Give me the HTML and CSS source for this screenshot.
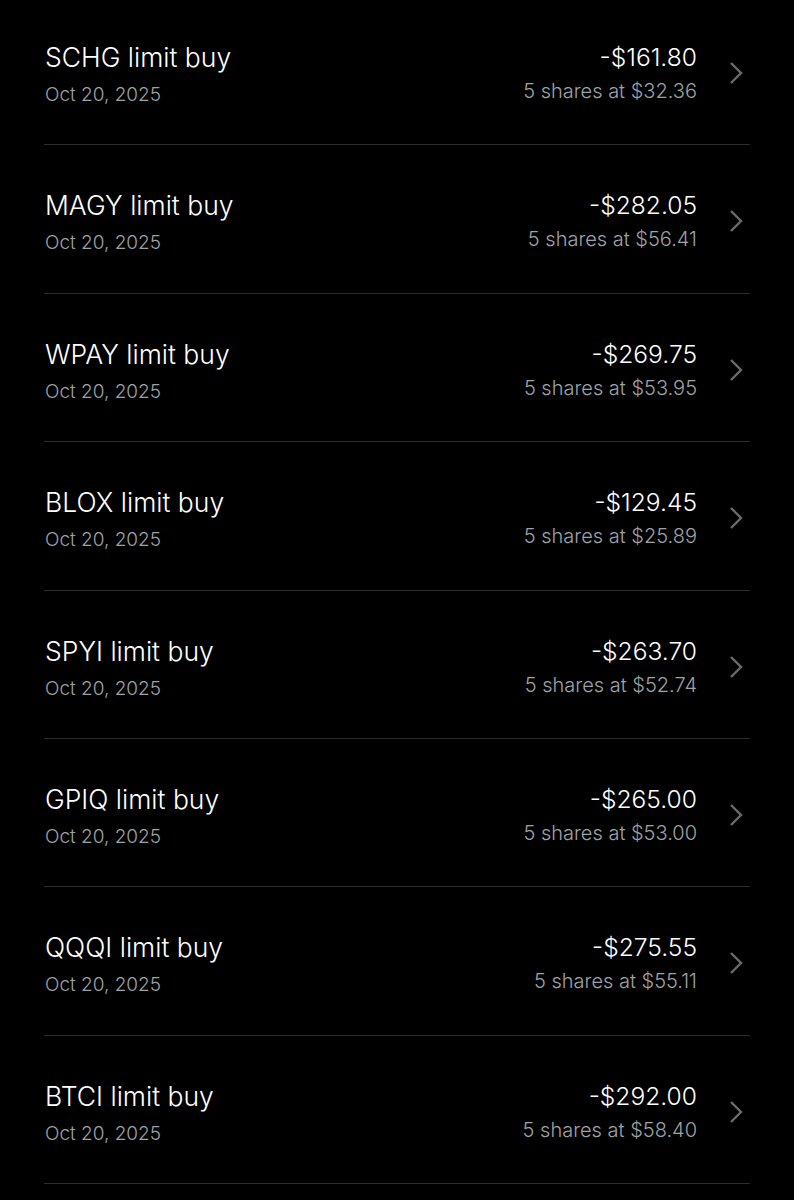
FILE: index.html
```html
<!DOCTYPE html>
<html lang="en">
<head>
    <meta charset="UTF-8">
    <meta name="viewport" content="width=device-width, initial-scale=1.0">
    <title>History</title>
    <link rel="stylesheet" href="styles.css">
</head>
<body>
    <div class="history">
        <div class="order">
            <div class="order-left">
                <div class="order-title">SCHG limit buy</div>
                <div class="order-date">Oct 20, 2025</div>
            </div>
            <div class="order-right">
                <div class="order-amount">-$161.80</div>
                <div class="order-detail">5 shares at $32.36</div>
            </div>
            <svg class="chevron" viewBox="0 0 14 24"><path d="M2 2 L12 12 L2 22"/></svg>
        </div>
        <div class="order">
            <div class="order-left">
                <div class="order-title">MAGY limit buy</div>
                <div class="order-date">Oct 20, 2025</div>
            </div>
            <div class="order-right">
                <div class="order-amount">-$282.05</div>
                <div class="order-detail">5 shares at $56.41</div>
            </div>
            <svg class="chevron" viewBox="0 0 14 24"><path d="M2 2 L12 12 L2 22"/></svg>
        </div>
        <div class="order">
            <div class="order-left">
                <div class="order-title">WPAY limit buy</div>
                <div class="order-date">Oct 20, 2025</div>
            </div>
            <div class="order-right">
                <div class="order-amount">-$269.75</div>
                <div class="order-detail">5 shares at $53.95</div>
            </div>
            <svg class="chevron" viewBox="0 0 14 24"><path d="M2 2 L12 12 L2 22"/></svg>
        </div>
        <div class="order">
            <div class="order-left">
                <div class="order-title">BLOX limit buy</div>
                <div class="order-date">Oct 20, 2025</div>
            </div>
            <div class="order-right">
                <div class="order-amount">-$129.45</div>
                <div class="order-detail">5 shares at $25.89</div>
            </div>
            <svg class="chevron" viewBox="0 0 14 24"><path d="M2 2 L12 12 L2 22"/></svg>
        </div>
        <div class="order">
            <div class="order-left">
                <div class="order-title">SPYI limit buy</div>
                <div class="order-date">Oct 20, 2025</div>
            </div>
            <div class="order-right">
                <div class="order-amount">-$263.70</div>
                <div class="order-detail">5 shares at $52.74</div>
            </div>
            <svg class="chevron" viewBox="0 0 14 24"><path d="M2 2 L12 12 L2 22"/></svg>
        </div>
        <div class="order">
            <div class="order-left">
                <div class="order-title">GPIQ limit buy</div>
                <div class="order-date">Oct 20, 2025</div>
            </div>
            <div class="order-right">
                <div class="order-amount">-$265.00</div>
                <div class="order-detail">5 shares at $53.00</div>
            </div>
            <svg class="chevron" viewBox="0 0 14 24"><path d="M2 2 L12 12 L2 22"/></svg>
        </div>
        <div class="order">
            <div class="order-left">
                <div class="order-title">QQQI limit buy</div>
                <div class="order-date">Oct 20, 2025</div>
            </div>
            <div class="order-right">
                <div class="order-amount">-$275.55</div>
                <div class="order-detail">5 shares at $55.11</div>
            </div>
            <svg class="chevron" viewBox="0 0 14 24"><path d="M2 2 L12 12 L2 22"/></svg>
        </div>
        <div class="order">
            <div class="order-left">
                <div class="order-title">BTCI limit buy</div>
                <div class="order-date">Oct 20, 2025</div>
            </div>
            <div class="order-right">
                <div class="order-amount">-$292.00</div>
                <div class="order-detail">5 shares at $58.40</div>
            </div>
            <svg class="chevron" viewBox="0 0 14 24"><path d="M2 2 L12 12 L2 22"/></svg>
        </div>
    </div>
</body>
</html>
```

FILE: styles.css
```css
body {
    margin: 0;
    padding: 0;
    background: #000;
    color: #fff;
    font-family: Inter, "Liberation Sans", sans-serif;
    height: 1200px;
    overflow: hidden;
}
.history {
    margin: -3px 44px 0 44px;
}
.order {
    display: flex;
    align-items: flex-start;
    height: 148.4px;
    box-sizing: border-box;
    border-bottom: 1px solid #2c2c2c;
    padding-top: 43px;
}
.order-left {
    flex: 1;
    padding-left: 1px;
}
.order-title {
    font-size: 26.5px;
    line-height: 34px;
    font-weight: 300;
}
.order-date {
    font-size: 19px;
    line-height: 30px;
    margin-top: 6px;
    color: #9ea3a8;
    font-weight: 300;
}
.order-right {
    text-align: right;
}
.order-amount {
    font-size: 24.6px;
    line-height: 34px;
    font-weight: 300;
}
.order-detail {
    font-size: 20px;
    line-height: 30px;
    margin-top: 2px;
    color: #9ea3a8;
    font-weight: 300;
}
.chevron {
    width: 14px;
    height: 24px;
    margin: 21px 7px 0 32px;
    fill: none;
    stroke: #6b6b6b;
    stroke-width: 2.4;
}
```
